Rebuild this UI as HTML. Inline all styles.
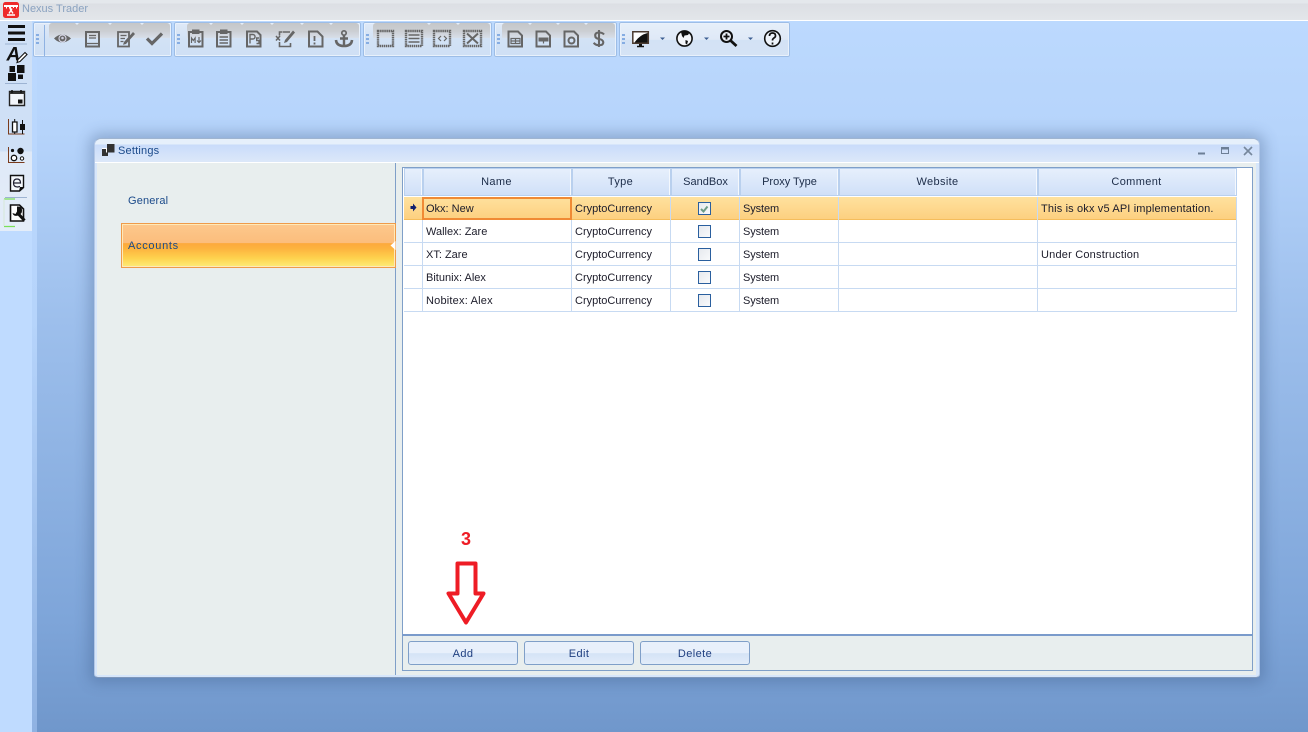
<!DOCTYPE html>
<html><head><meta charset="utf-8"><title>Nexus Trader</title>
<style>
*{box-sizing:border-box}
html,body{margin:0;padding:0;width:1308px;height:732px;overflow:hidden;background:#bfdbff;font-family:"Liberation Sans",sans-serif;font-size:11px;color:#222}
.a{position:absolute}
#title{left:0;top:0;width:1308px;height:21px;background:linear-gradient(#e4e8ec 0,#e4e8ec 3px,#dcdfe4 4px,#e3e6ea 20px);border-bottom:1px solid #fff}
#title span{position:absolute;left:22px;top:3px;line-height:13px;color:#8aa2c0;font-size:11px;letter-spacing:0}
#main{left:32px;top:21px;width:1276px;height:711px;background:linear-gradient(#bcd9fe 0,#b6d4fb 110px,#9dbfec 300px,#7ea5d9 600px,#7097cb 711px)}
#mainl{left:32px;top:21px;width:5px;height:711px;background:linear-gradient(#bcd9fe 0,#b6d4fb 300px,#8fb2e2 711px)}
#strip{left:0;top:21px;width:32px;height:210px;background:linear-gradient(#cfe0f6 0,#cfe0f6 130px,#dfe9f7 131px,#e4edf9 210px)}
.tb{position:absolute;top:22px;height:35px;background:linear-gradient(#dfe9f7,#d2e2f5 50%,#cfe0f5);border:1px solid #fff;outline:1px solid #9dbde6;outline-offset:-1px;border-radius:2px;box-shadow:inset 0 0 0 1px #e9f1fb}
.band{position:absolute;top:0;height:15px;background:linear-gradient(#c5c6c8,#cbced3 8px,#d8dfe9 15px);border-radius:3px 3px 0 0}
.grip{position:absolute;left:2px;top:11px;width:3px;height:11px;background:repeating-linear-gradient(#86ade3 0 2px,transparent 2px 4px)}
#win{left:94px;top:138px;width:1166px;height:540px;border-radius:7px 7px 4px 4px;background:#d6e6fb;border:1px solid #b4c8e6;border-top-color:#9fb4d0;border-bottom-color:#7f97ba;box-shadow:0 0 14px 5px rgba(50,75,120,.3)}
#wh{left:95px;top:139px;width:1164px;height:24px;border-radius:6px 6px 0 0;background:linear-gradient(#e6f0fb 0,#e6f0fb 5px,#c9dcfa 6px,#dbe7f9 22px);border-bottom:1px solid #fff}
#wt{left:118px;top:145px;color:#1b4a8a;font-size:11px;letter-spacing:.2px}
#left{left:97px;top:163px;width:298px;height:512px;background:#e8eeee}
#vl{left:395px;top:163px;width:1px;height:512px;background:#7f9fc8}
#rt{left:396px;top:163px;width:860px;height:512px;background:#e8eeee}
.nav{position:absolute;left:128px;color:#1b4a8a}
#acc{left:121px;top:223px;width:275px;height:45px;border:1px solid #ef9b4a;box-shadow:inset 0 0 0 1px #ffe9b8;background:linear-gradient(#fdc88c 0,#fcbd7c 44%,#fda93c 45%,#fdb43f 58%,#fed34e 80%,#fdec7a 100%)}
#grid{left:402px;top:167px;width:851px;height:468px;background:#fff;border:1px solid #7f9fc8;border-bottom:0}
.c{position:absolute;white-space:nowrap;overflow:hidden;letter-spacing:0;line-height:25px;padding-left:3px;height:23px;color:#1c1c2a}
.h{position:absolute;top:168px;height:28px;background:linear-gradient(#e7f0fc,#cfdff8);border-right:2px solid #f4f8fd;outline:1px solid #b9d0ee;outline-offset:-1px;text-align:center;line-height:28px;color:#1c2c48;letter-spacing:.36px}
.rl{position:absolute;left:404px;width:833px;height:1px;background:#c7daf2}
.vl{position:absolute;top:197px;width:1px;height:115px;background:#c7daf2}
.cb{position:absolute;left:698px;width:13px;height:13px;border:1px solid #2a5f9e;background:linear-gradient(135deg,#e6e9ee,#f8f9fb)}
#foot{left:402px;top:634px;width:851px;height:2px;background:#7a9bcb}
#footb{left:402px;top:636px;width:851px;height:35px;background:#e8eeee;border:1px solid #7f9fc8;border-top:0}
.btn{position:absolute;top:641px;width:110px;height:24px;border:1px solid #7f9fc8;border-radius:3px;background:linear-gradient(#e8f0fb 0,#e8f0fb 50%,#d4e3f6 52%,#e2ecf9 100%);text-align:center;line-height:24px;color:#1f3f80;letter-spacing:.4px}
#three{left:461px;top:529px;color:#ee1c25;font-weight:bold;font-size:18px}
</style></head><body>
<div class="a" id="main"></div><div class="a" id="mainl"></div>
<div class="a" id="title"><span>Nexus Trader</span></div>
<div class="a" id="strip"></div>

<div class="tb" style="left:33px;width:139px"><div class="grip"></div><div style="position:absolute;left:10px;top:2px;width:1px;height:31px;background:#8fb2e2"></div><div class="band" style="left:15px;width:121px"></div></div>
<div class="tb" style="left:174px;width:187px"><div class="grip"></div><div class="band" style="left:12px;width:172px"></div></div>
<div class="tb" style="left:363px;width:129px"><div class="grip"></div><div class="band" style="left:9px;width:117px"></div></div>
<div class="tb" style="left:494px;width:123px"><div class="grip"></div><div class="band" style="left:7px;width:113px"></div></div>
<div class="tb" style="left:619px;width:171px;background:linear-gradient(#e6eff9,#dfe9f7 50%,#d3e2f5 52%,#d5e3f5)"><div class="grip"></div></div>

<div class="a" id="win"></div><div class="a" id="wh"></div><div class="a" id="wt">Settings</div>
<div class="a" id="left"></div><div class="a" id="vl"></div><div class="a" id="rt"></div>
<div class="nav" style="top:195px;letter-spacing:.15px">General</div>
<div class="a" id="acc"></div><div class="nav" style="top:240px;letter-spacing:.7px">Accounts</div>

<div class="a" id="grid"></div>
<div class="h" style="left:404px;width:19px"></div>
<div class="h" style="left:423px;width:149px">Name</div>
<div class="h" style="left:572px;width:99px">Type</div>
<div class="h" style="left:671px;width:69px;letter-spacing:0;padding-left:2px">SandBox</div>
<div class="h" style="left:740px;width:99px;letter-spacing:0;padding-left:2px">Proxy Type</div>
<div class="h" style="left:839px;width:199px">Website</div>
<div class="h" style="left:1038px;width:199px">Comment</div>

<div class="a" style="left:404px;top:197px;width:833px;height:23px;background:linear-gradient(#fee19e,#fdd080);border-bottom:1px solid #f5bd5c"></div>
<div class="rl" style="top:242px"></div><div class="rl" style="top:265px"></div><div class="rl" style="top:288px"></div><div class="rl" style="top:311px"></div>
<div class="vl" style="left:422px"></div><div class="vl" style="left:571px"></div><div class="vl" style="left:670px"></div><div class="vl" style="left:739px"></div><div class="vl" style="left:838px"></div><div class="vl" style="left:1037px"></div><div class="vl" style="left:1236px"></div>
<div class="a" style="left:422px;top:197px;width:150px;height:23px;border:2px solid #f08a35"></div>

<div class="c" style="left:423px;top:197px">Okx: New</div>
<div class="c" style="left:572px;top:197px">CryptoCurrency</div>
<div class="c" style="left:740px;top:197px;letter-spacing:-.1px">System</div>
<div class="c" style="left:1038px;top:197px;letter-spacing:.15px">This is okx v5 API implementation.</div>
<div class="cb" style="top:202px"></div>
<div class="c" style="left:423px;top:220px">Wallex: Zare</div>
<div class="c" style="left:572px;top:220px">CryptoCurrency</div>
<div class="c" style="left:740px;top:220px;letter-spacing:-.1px">System</div>
<div class="cb" style="top:225px"></div>
<div class="c" style="left:423px;top:243px">XT: Zare</div>
<div class="c" style="left:572px;top:243px">CryptoCurrency</div>
<div class="c" style="left:740px;top:243px;letter-spacing:-.1px">System</div>
<div class="c" style="left:1038px;top:243px;letter-spacing:.2px">Under Construction</div>
<div class="cb" style="top:248px"></div>
<div class="c" style="left:423px;top:266px">Bitunix: Alex</div>
<div class="c" style="left:572px;top:266px">CryptoCurrency</div>
<div class="c" style="left:740px;top:266px;letter-spacing:-.1px">System</div>
<div class="cb" style="top:271px"></div>
<div class="c" style="left:423px;top:289px;letter-spacing:.2px">Nobitex: Alex</div>
<div class="c" style="left:572px;top:289px">CryptoCurrency</div>
<div class="c" style="left:740px;top:289px;letter-spacing:-.1px">System</div>
<div class="cb" style="top:294px"></div>

<div class="a" id="footb"></div><div class="a" id="foot"></div>
<div class="btn" style="left:408px">Add</div>
<div class="btn" style="left:524px">Edit</div>
<div class="btn" style="left:640px">Delete</div>
<div class="a" id="three">3</div>

<svg class="a" style="left:0;top:0" width="1308" height="732" viewBox="0 0 1308 732" fill="none">
<!-- logo -->
<rect x="3" y="2" width="16" height="16" rx="2.500" fill="#ee2a2a"/>
<path d="M4 5h14v2h-1v1.500h-1V7h-2v1h-1V7h-2v1.500H9V7H7v1.500H6V7H4z" fill="#fff"/>
<path d="M10 8.500l3 5M12 8.500l-3 5M7 15h8" stroke="#fff" stroke-width="1.400"/>
<!-- grid arrow + check -->
<path d="M410.500 206h2.500v-2.500l3.500 4-3.500 4V209h-2.500z" fill="#12206e"/>
<path d="M701 209l2.500 2.500 4-5" stroke="#6c9c86" stroke-width="2"/>
<!-- accounts notch -->
<path d="M395.500 241l-5 4.500 5 4.500z" fill="#fff"/>
<!-- window icons -->
<path d="M102 149h6v7h-6z" fill="#333"/><path d="M107 144h7.500v8.500h-7.500z" fill="#333"/><path d="M106.500 148v4.500" stroke="#fff"/><path d="M102 148.500h4.500" stroke="#fff"/>
<path d="M1198 153.500h7" stroke="#6d7f96" stroke-width="2"/>
<path d="M1221.500 147.500h7v6h-7z" stroke="#6d7f96"/><path d="M1221 148.500h8" stroke="#6d7f96" stroke-width="2"/>
<path d="M1244 147l8 8M1252 147l-8 8" stroke="#76879c" stroke-width="1.600"/>
<!-- red arrow -->
<path d="M457.500 563.500h18v30h8l-17.500 29-17.500-29h9z" fill="#fff" stroke="#ee1c25" stroke-width="4" stroke-linejoin="round"/>
<!-- toolbar group 1 -->
<g fill="#666" stroke="#666">
<path d="M54 38.500q8-8 17 0q-9 8-17 0z" stroke="none"/><circle cx="62.500" cy="38.500" r="3.500" fill="#666" stroke="#dde"/><circle cx="62.500" cy="38" r="1.300" fill="#ccd" stroke="none"/>
<path d="M86 32h13v14.500H86z" fill="none" stroke-width="2"/><path d="M89 35.500h7M89 38h7M86 43.500h13" fill="none" stroke-width="1.300"/>
<path d="M118 32h11v14.500h-11z" fill="none" stroke-width="1.800"/><path d="M120.500 35.500h6M120.500 38.500h4.500M120.500 41.500h3" fill="none" stroke-width="1.200"/><path d="M124 42l9-10 2 2-9 10-3 .8z" stroke="none"/>
<path d="M147 38.500l5 5 10-10" fill="none" stroke-width="3.200"/>
</g>
<!-- toolbar group 2 -->
<g stroke="#666" fill="none">
<path d="M189 32h13.500v14.500H189z" stroke-width="2"/><path d="M192.500 30h6.500v3.500h-6.500z" fill="#666"/><path d="M191.500 43v-5l1.800 2.500 1.800-2.500v5M199 37v5.500M197 40.500l2 2 2-2" stroke-width="1.200"/>
<path d="M217 32h13.500v14.500H217z" stroke-width="2"/><path d="M220.500 30h6.500v3.500h-6.500z" fill="#666"/><path d="M219.500 37h8.500M219.500 40h8.500M219.500 43h8.500" stroke-width="1.500"/>
<path d="M247 31.500h10l3.500 3.500v11.500H247z" stroke-width="2"/><path d="M250 43.500v-9h2.800a2 2 0 010 4.500H250M259 38h-2.300v2.500h2.300v3h-2.500" stroke-width="1.400"/>
<path d="M283 32h7M279.500 35.500V32h3M279.500 42v4.500h11V43" stroke-width="1.600"/><path d="M276 36l4 4.500M280 36l-4 4.500" stroke-width="1.500"/><path d="M285 40l8-9.500 2 2-8 9.500-3 1z" fill="#666" stroke="none"/>
<path d="M309 31.500h8.500l5 5v10h-13.500z" stroke-width="2"/><path d="M314.500 36v5M314.500 42.500v2" stroke-width="1.800"/>
<circle cx="344" cy="33" r="2.200" stroke-width="1.700"/><path d="M344 35v11M340 38.500h8" stroke-width="2.400"/><path d="M336 40q.5 6 8 6q7.500 0 8-6" stroke-width="2.600"/>
</g>
<!-- toolbar group 3 -->
<g stroke="#666" fill="none">
<rect x="378" y="31" width="15" height="15" stroke-width="2.400" stroke-dasharray="1.500 .6"/>
<rect x="406" y="31" width="16" height="15" stroke-width="2.400" stroke-dasharray="1.500 .6"/><path d="M408.500 35h11M408.500 38.500h11M408.500 42h11" stroke-width="1.400"/>
<rect x="434" y="31" width="16" height="15" stroke-width="2.400" stroke-dasharray="1.500 .6"/><path d="M441 36l-2.500 2.500 2.500 2.500M444 36l2.500 2.500-2.500 2.500" stroke-width="1.200"/>
<rect x="464" y="31" width="17" height="15" stroke-width="2.400" stroke-dasharray="1.500 .6"/><path d="M467 33.500l11 10M478 33.500l-11 10" stroke-width="2"/>
</g>
<!-- toolbar group 4 -->
<g stroke="#666" fill="none">
<path d="M508.500 31.500h9.500l4 4v11h-13.500z" stroke-width="2"/><path d="M511 38.500h9v5h-9zM515.500 38.500v5M511 41h9" stroke-width="1.200"/>
<path d="M536.500 31.500h9.500l4 4v11h-13.500z" stroke-width="2"/><path d="M539 38h9v3h-9z" fill="#666" stroke-width="1"/><path d="M543.500 41v2.500" stroke-width="1.200"/>
<path d="M564.500 31.500h9.500l4 4v11h-13.500z" stroke-width="2"/><circle cx="571.500" cy="40.500" r="3" stroke-width="2"/>
<path d="M604 34.500q-1.500-2-5-2-3.800 0-3.800 3t3.800 3.500 4.300 3.200q0 3-4.300 3-3.800 0-5.200-2.500M599 30v17" stroke-width="2.100"/>
</g>
<!-- toolbar group 5 -->
<path d="M632.800 31.800h15.500v11.500h-15.500z" fill="#fff" stroke="#4a3a30" stroke-width="1.500"/><path d="M634.500 42.500q5-7.500 13-9.500v9.500z" fill="#111"/><path d="M637 46.500h7" stroke="#111" stroke-width="1.500"/><path d="M639 44h3v2h-3z" fill="#111"/>
<circle cx="684.500" cy="38.500" r="7.600" fill="#f4f6fa" stroke="#111" stroke-width="1.600"/><path d="M681 32l5-1 3.500 1.500-1.500 2.500-3.500.5-1 2.500-1.500-2zM685.500 40l2.500 1-1 3.500-1.500-1z" fill="#111"/>
<circle cx="726.500" cy="36.500" r="5.500" fill="#eef3fa" stroke="#111" stroke-width="2"/><path d="M723.500 36.500h6M726.500 33.500v6" stroke="#111" stroke-width="1.800"/><path d="M730.500 40.500l6 5.500" stroke="#111" stroke-width="2.800"/>
<circle cx="772.500" cy="38.500" r="7.800" fill="#eef3fa" stroke="#111" stroke-width="1.600"/><path d="M769.500 36q0-3 3-3t3 2.700q0 1.600-2 2.600-1 .7-1 2.200" stroke="#111" stroke-width="1.700"/><path d="M772.500 42.500v2" stroke="#111" stroke-width="1.700"/>
<g fill="#3d5f92"><path d="M660 37.500h5l-2.500 2.500z"/><path d="M704 37.500h5l-2.500 2.500z"/><path d="M748 37.500h5l-2.500 2.500z"/></g>
<!-- left strip -->
<path d="M8 26.500h17M8 33h17M8 39.500h17" stroke="#111" stroke-width="3"/>
<path d="M5 44h22M5 83.500h22M5 197.500h22" stroke="#9db3d2"/>
<text x="6.500" y="60.500" font-family="Liberation Sans" font-weight="bold" font-style="italic" font-size="19" fill="#111">A</text>
<path d="M17 62.500l1-3 7-7 2 2-7 7z" fill="#fff" stroke="#111" stroke-width="1.100"/>
<path d="M9.500 66h5.500v6H9.500zM17 65h7.500v8H17zM8 73h8v8H8zM18 74.500h5v4.500h-5z" fill="#111"/>
<path d="M9.500 91.500h15v14h-15z" fill="#f3f6fb" stroke="#222" stroke-width="1.400"/><path d="M9.500 92h15v2h-15z" fill="#333"/><path d="M18 99.500h4.500v4H18z" fill="#111"/><path d="M12 90v3M21 90v3" stroke="#111" stroke-width="1.500"/>
<path d="M8.500 119v15h16" stroke="#7a3b1c" stroke-width="1"/><path d="M12.500 122h4.500v10h-4.500z" fill="#fff" stroke="#111" stroke-width="1.300"/><path d="M14.700 119v3M14.700 132v2" stroke="#111"/><path d="M20 124h5v6h-5z" fill="#111"/><path d="M22.500 120v14" stroke="#111"/>
<path d="M8.500 147v15.500h16" stroke="#7a3b1c"/><circle cx="12.500" cy="150.500" r="1.600" fill="#111"/><circle cx="20.500" cy="151" r="3.200" fill="#111"/><circle cx="14" cy="158" r="2.700" fill="#fff" stroke="#111" stroke-width="1.300"/><circle cx="22" cy="158.500" r="1.700" fill="#fff" stroke="#111"/>
<path d="M10.500 175.500h13v12l-4 3.500h-9z" fill="#f6f9fd" stroke="#111" stroke-width="1.400"/><path d="M19 191l5-4h-4z" fill="#111"/><path d="M13.500 183h7q0-4-3.500-4t-3.500 4q0 4 4 4l2.500-.5" stroke="#223" stroke-width="1.200"/>
<path d="M10.500 205h9l4 4v12h-13z" fill="#fff" stroke="#111" stroke-width="1.600"/><path d="M17 206.500q5-.5 5 3.500t-2 4l-1.500 1.500q-5 1.500-6-2.500l3 1 1.500-2.500z" fill="#111"/><path d="M18.500 214l6 6.500" stroke="#111" stroke-width="3"/>
<path d="M4 199h11M4 226.500h11" stroke="#7be05a" stroke-width="1.200"/><path d="M4 199v27" stroke="#d6e8d8"/>
<!-- band notches -->
<g fill="#e6eef8"><path d="M75 23l2 2 2-2zM108 23l2 2 2-2zM140 23l2 2 2-2zM209 23l2 2 2-2zM240 23l2 2 2-2zM270 23l2 2 2-2zM300 23l2 2 2-2zM329 23l2 2 2-2zM427 23l2 2 2-2zM456 23l2 2 2-2zM528 23l2 2 2-2zM556 23l2 2 2-2zM584 23l2 2 2-2z"/></g>
</svg>
</body></html>
